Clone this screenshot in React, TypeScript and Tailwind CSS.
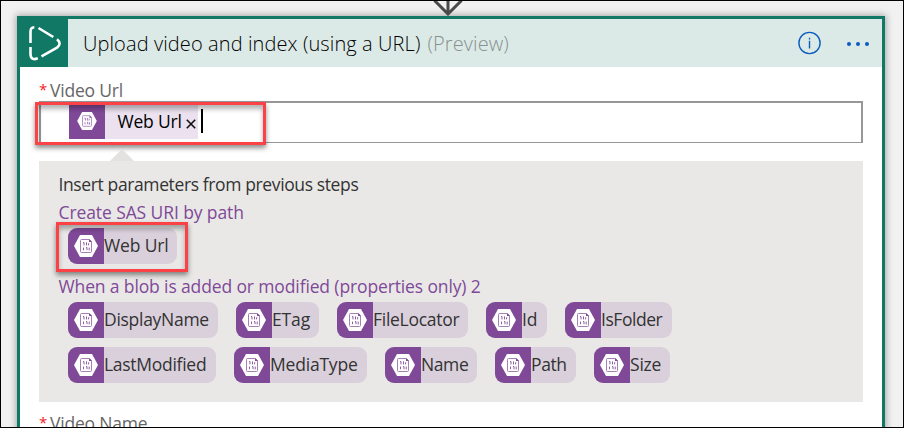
type ChipProps = { label: string; width: string; tracking: string };

const rowOne: ChipProps[] = [
  { label: "DisplayName", width: "w-[150px]", tracking: "tracking-[-0.28px]" },
  { label: "ETag", width: "w-[83px]", tracking: "tracking-[-0.15px]" },
  { label: "FileLocator", width: "w-[131px]", tracking: "tracking-[-0.28px]" },
  { label: "Id", width: "w-[61px]", tracking: "tracking-[-0.2px]" },
  { label: "IsFolder", width: "w-[107px]", tracking: "tracking-[-0.45px]" },
];

const rowTwo: ChipProps[] = [
  { label: "LastModified", width: "w-[148px]", tracking: "tracking-[-0.28px]" },
  { label: "MediaType", width: "w-[133px]", tracking: "tracking-[-0.2px]" },
  { label: "Name", width: "w-[92px]", tracking: "tracking-[-0.4px]" },
  { label: "Path", width: "w-[81px]", tracking: "tracking-[-0.4px]" },
  { label: "Size", width: "w-[76px]", tracking: "tracking-[-0.2px]" },
];

function BlobIcon({ small = false }: { small?: boolean }) {
  return (
    <svg viewBox="0 0 24 22" className={small ? "h-[18px] w-[20px]" : "h-[22px] w-[24px]"} aria-hidden="true">
      <path d="M6 0H18L24 11L18 22H6L0 11Z" fill="#fff" />
      <path d="M7.5 4.5H15.5L17.5 6.5V16.5Q17.5 17.5 16.5 17.5H7.5Q6.5 17.5 6.5 16.5V5.5Q6.5 4.5 7.5 4.5Z" fill="none" stroke="#9c70ae" strokeWidth="0.9" />
      <path d="M15 4.2V7H18Z" fill="#804998" />
      <path d="M9 7.6H10V10.4M12.5 7.4V10.4M14.8 8.2L14.4 10.4M9.5 12.6V15.2M12 12.6H13V15.2M15.2 12.6V15.4" fill="none" stroke="#804998" strokeWidth="0.9" />
    </svg>
  );
}

function Chip({ label, width, tracking }: ChipProps) {
  return (
    <div className={`flex h-9 shrink-0 overflow-hidden rounded-[9px] bg-[#dad0dc] ${width}`}>
      <div className="flex w-9 shrink-0 items-center justify-center bg-[#804998]">
        <BlobIcon />
      </div>
      <span className={`whitespace-nowrap leading-[35px] text-[#333] ${tracking}`}>{label}</span>
    </div>
  );
}

function FieldLabel({ text }: { text: string }) {
  return (
    <div className="flex h-6 whitespace-nowrap leading-6 tracking-[-0.2px] text-[#666]">
      <span className="w-[11px] text-[15px] leading-[22px] text-[#f01a28]">*</span>
      <span>{text}</span>
    </div>
  );
}

export default function App() {
  return (
    <div className="relative h-[428px] w-[904px] overflow-hidden border border-black bg-[#f1f1f1] pl-4 pt-[15px] font-['Open_Sans','Noto_Sans',sans-serif] text-[17.5px]">
      <svg className="absolute left-[431px] top-0 z-10 h-[15px] w-8" viewBox="0 0 32 15" aria-hidden="true">
        <path d="M16 0V13M2.5 -0.5L16 13L29.5 -0.5" fill="none" stroke="#4a4a4a" strokeWidth="3" />
      </svg>

      <div className="h-[440px] w-[868px] border-[3px] border-[#117865] bg-white shadow-[0_0_7px_1px_rgba(0,0,0,0.32)]">
        <header className="flex h-12 items-center bg-[#dceae7]">
          <div className="flex h-12 w-12 shrink-0 items-center justify-center bg-[#117865]">
            <svg viewBox="0 0 48 48" className="size-12" fill="none" stroke="#fff" strokeWidth="2.6" aria-hidden="true">
              <path d="M14.3 8.2Q10.5 8.5 10.5 12.5V24" />
              <path d="M10.5 28V35.5Q10.7 40.2 15 40.1L17.8 39.3" />
              <path d="M18.5 9L33.3 18" />
              <path d="M37 20.2Q42.2 24.5 37 28.7L21.5 37.4" />
            </svg>
          </div>
          <h1 className="flex grow whitespace-pre pl-[15px] pt-0.5 text-[20px] font-light leading-[46px] tracking-[0.1px] text-black">
            <span>Upload video and index (using a URL)</span>
            <span className="pl-[7px] text-[#87918f]">(Preview)</span>
          </h1>
          <svg viewBox="0 0 24 24" className="mr-[25px] size-6 shrink-0" fill="none" stroke="#0a5cbf" aria-hidden="true">
            <circle cx="11.5" cy="12" r="10.6" strokeWidth="1.4" />
            <path d="M11.5 9.8V17.5M11.5 6.8V8.4" strokeWidth="1.4" />
          </svg>
          <div className="mr-[13px] mt-0.5 flex gap-[5px]">
            <i className="size-1 rounded-full bg-[#0a5cbf]" />
            <i className="size-1 rounded-full bg-[#0a5cbf]" />
            <i className="size-1 rounded-full bg-[#0a5cbf]" />
          </div>
        </header>

        <div className="px-[19px] pt-[11px]">
          <FieldLabel text="Video Url" />

          <div className="relative mt-[-1px] flex h-[42px] w-[824px] items-start border-2 border-b border-[#979797] pl-7">
            <div className="mt-0.5 flex h-[34px] w-[129px] bg-[#ebe1ef]">
              <div className="flex w-9 shrink-0 items-center justify-center bg-[#804998] pb-[2px]">
                <BlobIcon small />
              </div>
              <span className="whitespace-nowrap pl-[12.5px] leading-[32px] tracking-[-0.2px] text-black">Web Url</span>
              <svg viewBox="0 0 10 10" className="ml-1 mt-[14px] size-[10px] shrink-0" aria-hidden="true">
                <path d="M0.8 0.8L9.2 9.2M9.2 0.8L0.8 9.2" stroke="#111" strokeWidth="1.6" />
              </svg>
            </div>
            <div className="ml-[3px] mt-[6px] h-6 w-0.5 bg-black" />
            <div className="absolute left-[-6px] top-[-1px] h-[43px] w-[231px] border-[3px] border-[#fb4246] shadow-[0_3px_5px_rgba(0,0,0,0.45),inset_0_4px_5px_rgba(0,0,0,0.3)]" />
          </div>

          <div className="relative mt-[18px] h-[241px] w-[824px] bg-[#e9e8e6] pl-[19.5px] pt-[9px]">
            <svg className="absolute left-[71px] top-[-12px] h-3 w-6" viewBox="0 0 24 12" aria-hidden="true">
              <path d="M0 12L12 0L24 12Z" fill="#e3e2e0" />
            </svg>
            <p className="h-7 whitespace-nowrap leading-7 tracking-[-0.38px] text-[#333]">Insert parameters from previous steps</p>
            <p className="h-7 whitespace-nowrap leading-7 tracking-[-0.1px] text-[#804998]">Create SAS URI by path</p>
            <div className="relative ml-[9.5px] mt-0.5">
              <Chip label="Web Url" width="w-[109px]" tracking="tracking-[-0.15px]" />
              <div className="absolute left-[-12px] top-[-6px] h-[50px] w-[132px] border-[3px] border-[#fb4246] shadow-[0_3px_5px_rgba(0,0,0,0.45),inset_0_4px_5px_rgba(0,0,0,0.3)]" />
            </div>
            <p className="mt-2 h-7 whitespace-nowrap leading-7 tracking-[-0.13px] text-[#804998]">When a blob is added or modified (properties only) 2</p>
            <div className="ml-[9.5px] mt-0.5 flex flex-col gap-[9px]">
              <div className="flex gap-[18px]">
                {rowOne.map((chip) => <Chip key={chip.label} {...chip} />)}
              </div>
              <div className="flex gap-[18px]">
                {rowTwo.map((chip) => <Chip key={chip.label} {...chip} />)}
              </div>
            </div>
          </div>

          <div className="mt-[9px]">
            <FieldLabel text="Video Name" />
          </div>
        </div>
      </div>
    </div>
  );
}
